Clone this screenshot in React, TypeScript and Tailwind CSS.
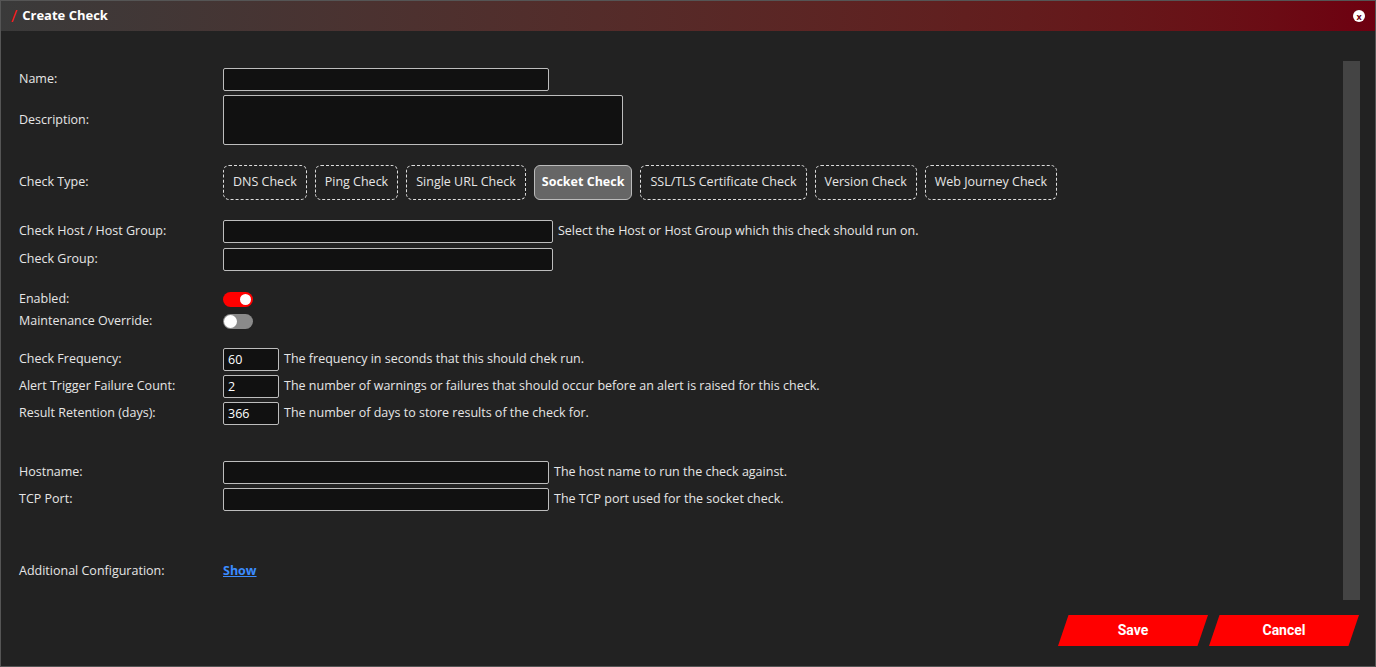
const font = { fontFamily: '"Open Sans", "Noto Sans", sans-serif' };

function Row({ label, children, className = '' }: { label: string; children?: React.ReactNode; className?: string }) {
  return (
    <div className={`flex items-center ${className}`}>
      <div className="w-[204px] shrink-0 text-[12.5px] text-[#e6e6e6]">{label}</div>
      {children}
    </div>
  );
}

function Input({ w, value = '' }: { w: string; value?: string }) {
  return (
    <div className={`${w} h-[23px] rounded-[2px] border border-[#bdbdbd] bg-[#111] px-[4px] text-[12.5px] leading-[21px] text-white`}>{value}</div>
  );
}

function Help({ text }: { text: string }) {
  return <span className="ml-[5px] text-[12.5px] text-[#e6e6e6]">{text}</span>;
}

const types = ['DNS Check', 'Ping Check', 'Single URL Check', 'Socket Check', 'SSL/TLS Certificate Check', 'Version Check', 'Web Journey Check'];

export default function App() {
  return (
    <div style={font} className="h-[667px] w-[1376px] overflow-hidden border border-[#555] bg-[#222]">
      <div className="flex h-[30px] items-center justify-between bg-gradient-to-r from-[#3a3a3a] to-[#6e0010] px-[10px]">
        <div className="flex items-center gap-[5px] text-[13px] font-bold text-white">
          <span className="text-[17px] font-normal text-[#ff1a1a]">/</span>Create Check
        </div>
        <div className="flex h-[12px] w-[12px] items-center justify-center rounded-full bg-white text-[9px] font-bold leading-none text-[#6e0010]">x</div>
      </div>
      <div className="flex">
        <div className="flex-1 pl-[18px] pt-[37px]">
          <Row label="Name:"><Input w="w-[326px]" /></Row>
          <Row label="Description:" className="mt-[4px]">
            <div className="h-[50px] w-[400px] rounded-[2px] border border-[#bdbdbd] bg-[#111]" />
          </Row>
          <Row label="Check Type:" className="mt-[20px]">
            <div className="flex gap-[8px]">
              {types.map(t => t === 'Socket Check' ? (
                <div key={t} className="flex h-[35px] items-center rounded-[6px] border border-[#bbb] bg-[#666] px-[7px] text-[12.5px] font-bold text-white">{t}</div>
              ) : (
                <div key={t} className="flex h-[35px] items-center rounded-[6px] border border-dashed border-[#ddd] px-[9px] text-[12.5px] text-[#e6e6e6]">{t}</div>
              ))}
            </div>
          </Row>
          <Row label="Check Host / Host Group:" className="mt-[20px]"><Input w="w-[330px]" /><Help text="Select the Host or Host Group which this check should run on." /></Row>
          <Row label="Check Group:" className="mt-[5px]"><Input w="w-[330px]" /></Row>
          <Row label="Enabled:" className="mt-[20px] h-[17px]">
            <div className="flex h-[15px] w-[30px] items-center justify-end rounded-full bg-[#ff0000] px-[2px]"><div className="h-[11px] w-[11px] rounded-full bg-white" /></div>
          </Row>
          <Row label="Maintenance Override:" className="mt-[5px] h-[17px]">
            <div className="flex h-[15px] w-[30px] items-center rounded-full bg-[#8a8a8a] px-[1px]"><div className="h-[13px] w-[13px] rounded-full bg-white" /></div>
          </Row>
          <Row label="Check Frequency:" className="mt-[18px]"><Input w="w-[56px]" value="60" /><Help text="The frequency in seconds that this should chek run." /></Row>
          <Row label="Alert Trigger Failure Count:" className="mt-[4px]"><Input w="w-[56px]" value="2" /><Help text="The number of warnings or failures that should occur before an alert is raised for this check." /></Row>
          <Row label="Result Retention (days):" className="mt-[4px]"><Input w="w-[56px]" value="366" /><Help text="The number of days to store results of the check for." /></Row>
          <Row label="Hostname:" className="mt-[36px]"><Input w="w-[326px]" /><Help text="The host name to run the check against." /></Row>
          <Row label="TCP Port:" className="mt-[4px]"><Input w="w-[326px]" /><Help text="The TCP port used for the socket check." /></Row>
          <Row label="Additional Configuration:" className="mt-[51px]">
            <span className="text-[12.5px] font-bold text-[#3b8cff] underline">Show</span>
          </Row>
        </div>
        <div className="mr-[15px] mt-[30px] h-[539px] w-[17px] bg-[#444]" />
      </div>
      <div className="mt-[15px] flex justify-end gap-[1px] pr-[16px]" style={{ fontFamily: 'Roboto, Arial, sans-serif' }}>
        {['Save', 'Cancel'].map(b => (
          <div key={b} className="flex h-[31px] w-[150px] items-center justify-center bg-[#ff0000] text-[14px] font-bold text-white [clip-path:polygon(7%_0,100%_0,93%_100%,0_100%)]">{b}</div>
        ))}
      </div>
    </div>
  );
}
